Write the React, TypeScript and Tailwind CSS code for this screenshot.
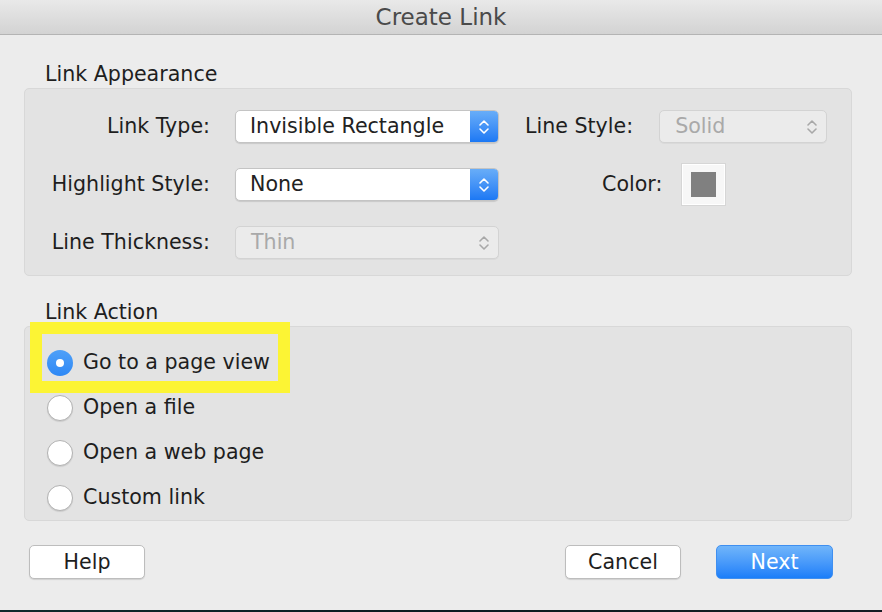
import React from 'react'

const font = { fontFamily: '"DejaVu Sans", "Liberation Sans", sans-serif' }

function Chevrons({ color }: { color: string }) {
  return (
    <svg width="12" height="18" viewBox="0 0 12 18" fill="none">
      <polyline points="2,7 6,3 10,7" stroke={color} strokeWidth="1.6" strokeLinecap="round" strokeLinejoin="round" />
      <polyline points="2,11 6,15 10,11" stroke={color} strokeWidth="1.6" strokeLinecap="round" strokeLinejoin="round" />
    </svg>
  )
}

function Popup({ value, width, disabled }: { value: string; width: string; disabled?: boolean }) {
  if (disabled) {
    return (
      <div className={`${width} h-[33px] flex items-center rounded-[5px] border border-[#d3d3d3] bg-[#ebebeb] shadow-[0_1px_0_rgba(0,0,0,0.04)]`}>
        <span className="flex-1 pl-[15px] text-[20.6px] text-[#a9a9a9] leading-none">{value}</span>
        <div className="w-[28px] flex justify-center">
          <Chevrons color="#a8a8a8" />
        </div>
      </div>
    )
  }
  return (
    <div className={`${width} h-[33px] flex items-stretch rounded-[5px] border border-[#c4c4c4] bg-white shadow-[0_1px_1px_rgba(0,0,0,0.12)] overflow-hidden`}>
      <span className="flex-1 pl-[14px] flex items-center text-[20.6px] text-[#222] leading-none">{value}</span>
      <div className="w-[28px] flex items-center justify-center bg-gradient-to-b from-[#68adf8] to-[#1b78f4]">
        <Chevrons color="#ffffff" />
      </div>
    </div>
  )
}

function Radio({ label, checked }: { label: string; checked?: boolean }) {
  return (
    <div className="h-[46px] flex items-center pl-[22px]">
      {checked ? (
        <div className="w-[26px] h-[26px] rounded-full bg-gradient-to-b from-[#4ea0f8] to-[#2e88f5] flex items-center justify-center">
          <div className="w-[8px] h-[8px] rounded-full bg-white" />
        </div>
      ) : (
        <div className="w-[26px] h-[26px] rounded-full bg-white border border-[#b2b2b2] shadow-[0_1px_1px_rgba(0,0,0,0.1)]" />
      )}
      <span className="ml-[10px] text-[20.6px] text-[#1e1e1e] leading-none">{label}</span>
    </div>
  )
}

function Button({ label, primary, width }: { label: string; primary?: boolean; width: string }) {
  return (
    <div
      className={`${width} h-[34px] rounded-[5px] flex items-center justify-center text-[20.6px] leading-none ${
        primary
          ? 'bg-gradient-to-b from-[#70b5fa] to-[#1a7ef9] text-white border border-[#3f8ff0]'
          : 'bg-white text-[#1e1e1e] border border-[#bdbdbd] shadow-[0_1px_1px_rgba(0,0,0,0.12)]'
      }`}
    >
      {label}
    </div>
  )
}

export default function App() {
  return (
    <div className="w-[882px] h-[612px] flex flex-col bg-[#ececec] overflow-hidden" style={font}>
      {/* title bar */}
      <div className="h-[35px] shrink-0 flex items-center justify-center bg-gradient-to-b from-[#e9e9e9] to-[#d3d3d3] border-b border-[#b4b4b4]">
        <span className="text-[23px] text-[#4a4a4a] leading-none">Create Link</span>
      </div>

      <div className="flex-1 relative">
        {/* Link Appearance */}
        <div className="mt-[27px] ml-[45px] h-[24px] text-[20.6px] leading-[24px] text-[#1e1e1e]">Link Appearance</div>
        <div className="mt-[2px] ml-[24px] w-[828px] h-[188px] rounded-[5px] bg-[#e3e3e3] border border-[#d8d8d8] pt-[21px] flex flex-col">
          <div className="h-[33px] flex items-center">
            <span className="w-[185px] text-right text-[20.6px] text-[#1e1e1e] leading-none">Link Type:</span>
            <div className="ml-[25px]">
              <Popup value="Invisible Rectangle" width="w-[264px]" />
            </div>
            <span className="ml-[26px] text-[20.6px] text-[#1e1e1e] leading-none">Line Style:</span>
            <div className="ml-[26px]">
              <Popup value="Solid" width="w-[168px]" disabled />
            </div>
          </div>
          <div className="mt-[25px] h-[33px] flex items-center">
            <span className="w-[185px] text-right text-[20.6px] text-[#1e1e1e] leading-none">Highlight Style:</span>
            <div className="ml-[25px]">
              <Popup value="None" width="w-[264px]" />
            </div>
            <span className="ml-[103px] text-[20.6px] text-[#1e1e1e] leading-none">Color:</span>
            <div className="ml-[20px] w-[43px] h-[41px] bg-[#f7f7f7] border border-[#ffffff] shadow-[0_0_0_1px_#d6d6d6] flex items-center justify-center">
              <div className="w-[25px] h-[25px] bg-[#808080]" />
            </div>
          </div>
          <div className="mt-[25px] h-[33px] flex items-center">
            <span className="w-[185px] text-right text-[20.6px] text-[#1e1e1e] leading-none">Line Thickness:</span>
            <div className="ml-[25px]">
              <Popup value="Thin" width="w-[264px]" disabled />
            </div>
          </div>
        </div>

        {/* Link Action */}
        <div className="mt-[24px] ml-[45px] h-[24px] text-[20.6px] leading-[24px] text-[#1e1e1e]">Link Action</div>
        <div className="mt-[2px] ml-[24px] w-[828px] h-[195px] rounded-[5px] bg-[#e3e3e3] border border-[#d8d8d8] pt-[13px] flex flex-col">
          <Radio label="Go to a page view" checked />
          <Radio label="Open a file" />
          <Radio label="Open a web page" />
          <Radio label="Custom link" />
        </div>

        {/* highlight annotation */}
        <div className="absolute left-[30px] top-[287px] w-[260px] h-[71px] border-[12px] border-[#fcf434]" />

        {/* buttons */}
        <div className="mt-[24px] flex items-center pl-[29px] pr-[49px]">
          <Button label="Help" width="w-[116px]" />
          <div className="flex-1" />
          <Button label="Cancel" width="w-[116px]" />
          <div className="ml-[35px]">
            <Button label="Next" width="w-[117px]" primary />
          </div>
        </div>
      </div>

      <div className="h-[2px] shrink-0 bg-gradient-to-r from-[#0f2a2c] via-[#0b1a20] to-[#151d24]" />
    </div>
  )
}
